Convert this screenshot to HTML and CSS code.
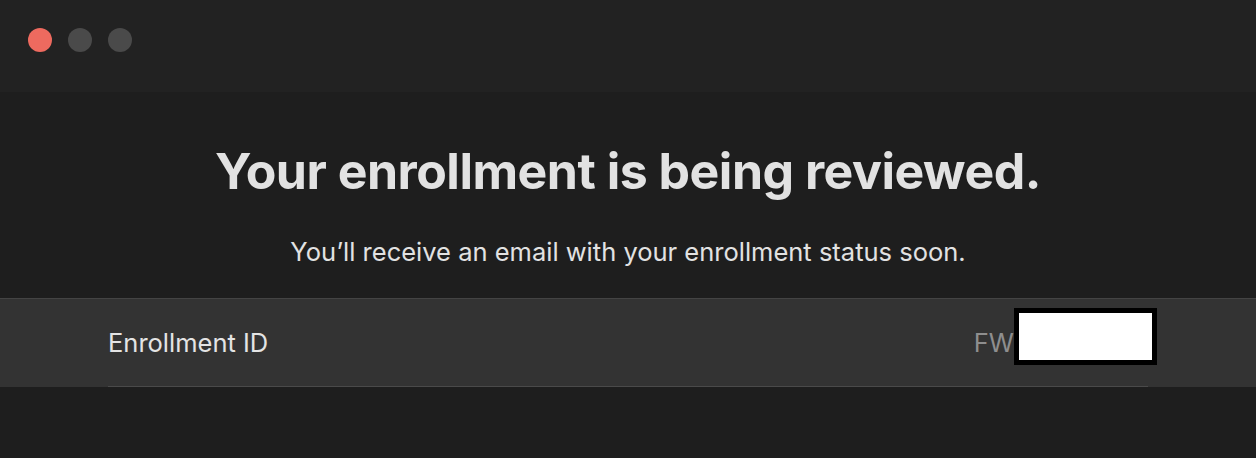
FILE: index.html
```html
<!DOCTYPE html>
<html lang="en">
<head>
    <meta charset="UTF-8">
    <title>Enrollment</title>
    <link rel="stylesheet" href="styles.css">
</head>
<body>
    <div class="window">
        <div class="titlebar">
            <span class="light close"></span>
            <span class="light"></span>
            <span class="light"></span>
        </div>
        <div class="content">
            <h1 class="title">Your enrollment is being reviewed.</h1>
            <p class="subtitle">You’ll receive an email with your enrollment status soon.</p>
            <div class="row">
                <div class="row-inner">
                    <span class="label">Enrollment ID</span>
                    <span class="value">FW<span class="redact"></span></span>
                </div>
            </div>
        </div>
    </div>
</body>
</html>
```

FILE: styles.css
```css
body, html {
    margin: 0;
    padding: 0;
    height: 100%;
    overflow: hidden;
    background: #1e1e1e;
    font-family: Inter, "Noto Sans", sans-serif;
}

.window {
    height: 100%;
    display: flex;
    flex-direction: column;
}

.titlebar {
    height: 92px;
    background: #222222;
    display: flex;
    align-items: flex-start;
    gap: 16px;
    padding: 28px 0 0 28px;
    box-sizing: border-box;
}

.light {
    width: 24px;
    height: 24px;
    border-radius: 50%;
    background: #4a4a4a;
}

.close {
    background: #ee6a5f;
}

.content {
    flex: 1;
    display: flex;
    flex-direction: column;
    align-items: center;
}

.title {
    margin: 47px 0 0;
    font-size: 50px;
    font-weight: 700;
    letter-spacing: -0.5px;
    color: #e2e2e2;
    line-height: 64px;
}

.subtitle {
    margin: 34px 0 0;
    font-size: 25.5px;
    color: #e2e2e2;
    line-height: 30px;
}

.row {
    margin-top: 31px;
    width: 100%;
    background: #333333;
    border-top: 1px solid #444444;
}

.row-inner {
    margin: 0 108px;
    height: 87px;
    display: flex;
    align-items: center;
    justify-content: space-between;
    border-bottom: 1px solid #4a4a4a;
}

.label {
    font-size: 25.5px;
    color: #e4e4e4;
}

/* the redaction box pokes past the separator on the right */
.value {
    display: flex;
    align-items: center;
    font-size: 25.5px;
    color: #8e8e8e;
    margin-right: -9px;
}

.redact {
    width: 133px;
    height: 47px;
    background: #ffffff;
    border: 5px solid #000000;
    margin-bottom: 13px;
}
```
